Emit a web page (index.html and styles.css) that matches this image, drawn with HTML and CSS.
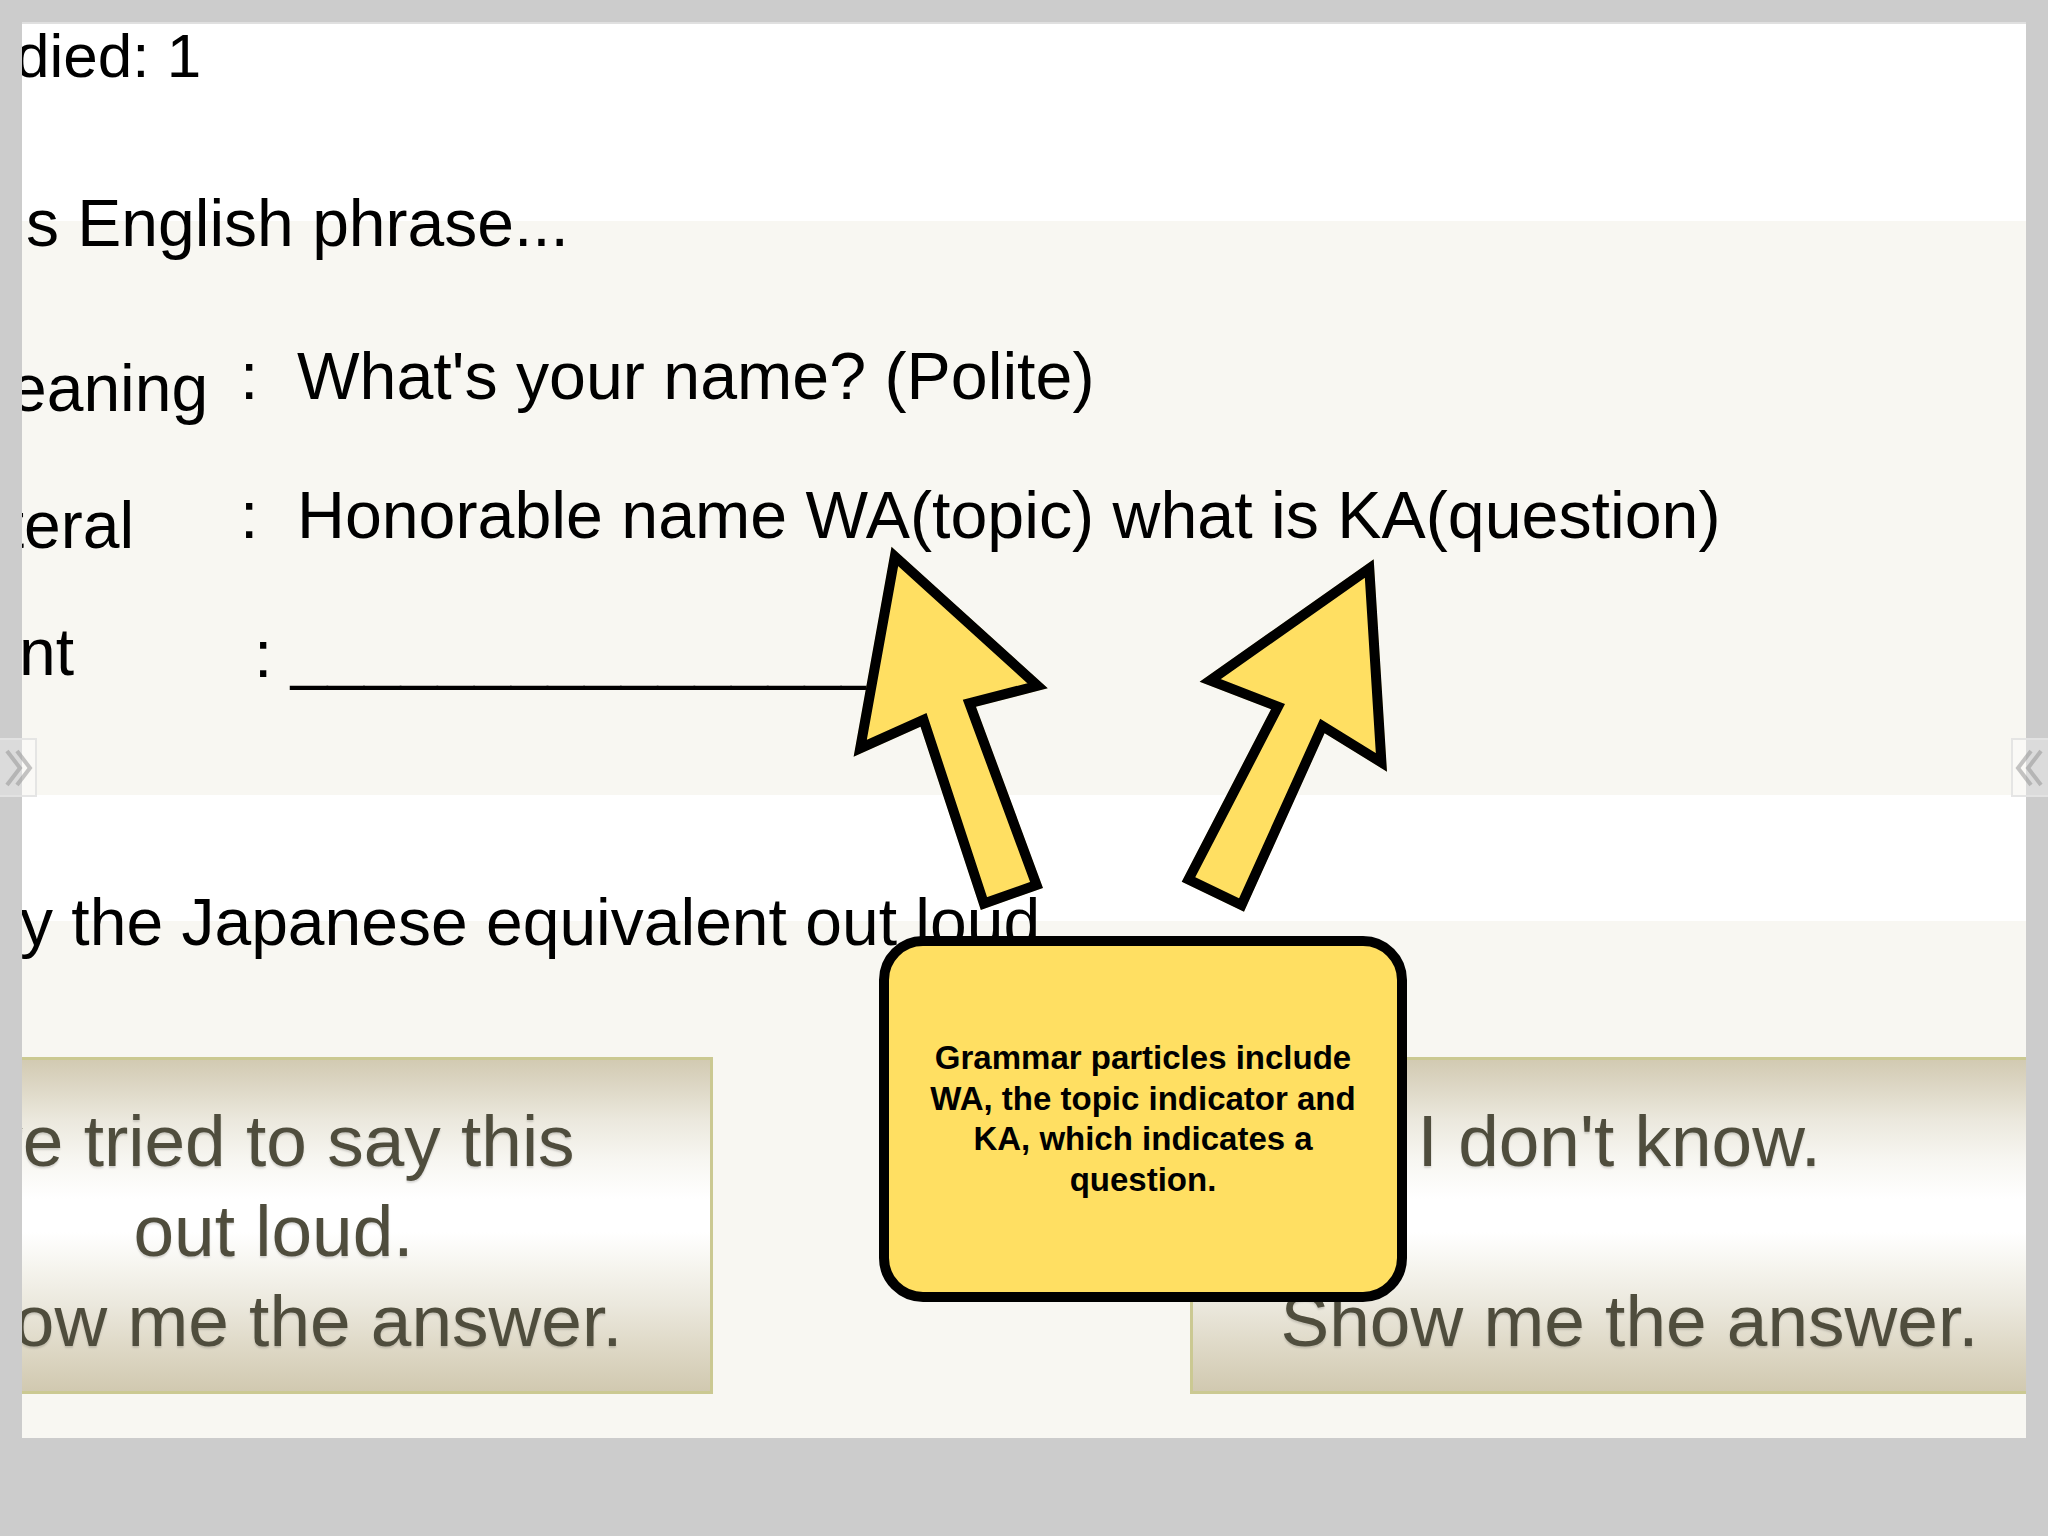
FILE: index.html
```html
<!DOCTYPE html>
<html lang="en">
<head>
<meta charset="utf-8">
<title>Flashcards</title>
<link rel="stylesheet" href="styles.css">
</head>
<body>
<main class="slide">
  <section class="band band-top">
    <p class="line line-count"><span class="clip"><span>Cards stu</span></span>died: 1</p>
    <p class="line line-heading"><span class="clip"><span>Translate thi</span></span>s English phrase...</p>
  </section>

  <section class="band band-phrase">
    <div class="row row-meaning">
      <span class="label"><span class="clip"><span>M</span></span>eaning</span>
      <span class="colon">:</span>
      <span class="value">What's your name? (Polite)</span>
    </div>
    <div class="row row-literal">
      <span class="label"><span class="clip"><span>Lit</span></span>eral</span>
      <span class="colon">:</span>
      <span class="value">Honorable name WA(topic) what is KA(question)</span>
    </div>
    <div class="row row-equiv">
      <span class="label"><span class="clip"><span>Equivale</span></span>nt</span>
      <span class="value">: __________________</span>
    </div>
  </section>

  <section class="band band-gap">
    <p class="line line-say"><span class="clip"><span>Sa</span></span>y the Japanese equivalent out loud</p>
  </section>

  <section class="band band-answer">
    <div class="buttons">
      <button class="btn" type="button">I've tried to say this&nbsp;<br>out loud.<br>Show me the answer.</button>
      <button class="btn" type="button">I don't know.&nbsp;<br><br>Show me the answer.</button>
    </div>
  </section>

  <svg class="arrows" viewBox="22 22 2004 1416" width="2004" height="1416" aria-hidden="true">
    <defs>
      <clipPath id="clip-left">
        <polygon points="891.5,546.7 1047.8,688.3 976,706.7 1043,888 980.8,910 920.5,726.7 853.6,756.7"/>
      </clipPath>
      <clipPath id="clip-right">
        <polygon points="1373.7,559.3 1387,771.7 1324.6,733.3 1244,911.7 1181.7,881.7 1271,709.3 1199.6,681.7"/>
      </clipPath>
    </defs>
    <polygon class="arrow" clip-path="url(#clip-left)" points="891.5,546.7 1047.8,688.3 976,706.7 1043,888 980.8,910 920.5,726.7 853.6,756.7"/>
    <polygon class="arrow" clip-path="url(#clip-right)" points="1373.7,559.3 1387,771.7 1324.6,733.3 1244,911.7 1181.7,881.7 1271,709.3 1199.6,681.7"/>
  </svg>

  <div class="callout">Grammar particles include WA, the topic indicator and KA, which indicates a question.</div>
</main>

<div class="pager pager-left" aria-label="Next">
  <svg viewBox="0 0 35 55" width="35" height="55" aria-hidden="true">
    <polyline points="7,11 20,28 7,45"/>
    <polyline points="17,11 30,28 17,45"/>
  </svg>
</div>
<div class="pager pager-right" aria-label="Previous">
  <svg viewBox="0 0 36 55" width="36" height="55" aria-hidden="true">
    <polyline points="18,11 5,28 18,45"/>
    <polyline points="28,11 15,28 28,45"/>
  </svg>
</div>
</body>
</html>
```
FILE: styles.css
```css
* {
  box-sizing: border-box;
  margin: 0;
  padding: 0;
}

html,
body {
  background: #cccccc;
}

body {
  position: relative;
  width: 2048px;
  height: 1536px;
  overflow: hidden;
  font-family: "Liberation Sans", Arial, Helvetica, sans-serif;
  color: #000;
}

.slide {
  position: relative;
  margin: 22px 22px 0;
  width: 2004px;
  height: 1416px;
  overflow: hidden;
  background: #ffffff;
}

/* text lines */
.line {
  font-size: 66px;
  line-height: 74px;
  white-space: nowrap;
}

/* hidden prefix that overflows past the left edge of the slide */
.clip {
  display: inline-flex;
  width: 0;
  justify-content: flex-end;
}

.clip > span {
  flex: none;
  white-space: pre;
}

/* bands */
.band {
  display: flow-root;
}

.band-top {
  height: 199px;
  border-top: 2px solid #e0e0e0;
}

.line-count {
  margin-top: -5px;
  margin-left: -7px;
  font-size: 62px;
}

.line-heading {
  margin-top: 93px;
  margin-left: 4px;
}

.band-phrase {
  height: 574px;
  padding-top: 118px;
  background: #f8f7f2;
}

.row {
  display: grid;
  grid-template-columns: 218px 57px auto;
  align-items: start;
  height: 139px;
  font-size: 66px;
  line-height: 74px;
  white-space: nowrap;
}

.row .value {
  font-size: 66.3px;
}

.row-equiv {
  grid-template-columns: 232px auto;
}

.row-equiv .value {
  font-size: 66px;
}

.label {
  display: block;
}

.row-meaning .label {
  margin-top: 12px;
  margin-left: -12px;
}

.row-literal .label {
  margin-top: 10px;
  margin-left: 2px;
}

.row-equiv .label {
  margin-top: -2px;
  margin-left: -3px;
}

.band-gap {
  height: 126px;
  padding-top: 90px;
  background: #ffffff;
}

.line-say {
  margin-left: -2px;
}

.band-answer {
  height: 517px;
  padding-top: 136px;
  background: #f8f7f2;
}

.buttons {
  display: flex;
  gap: 477px;
  margin-left: -188px;
}

.btn {
  display: block;
  flex: none;
  appearance: none;
  width: 879px;
  height: 337px;
  padding: 36px 0 25px;
  border: 3px solid #cbc992;
  background: linear-gradient(to bottom,
      #d2cab2 0%,
      #ddd7c5 8%,
      #ebe8dd 18%,
      #f7f6f1 30%,
      #ffffff 42%,
      #ffffff 52%,
      #f6f5ef 62%,
      #ebe8dd 74%,
      #ddd7c4 88%,
      #d1c9b0 100%);
  font-family: inherit;
  font-size: 73px;
  line-height: 90px;
  color: #4f4d3d;
  text-align: center;
  text-shadow: 0 2px 2px rgba(0, 0, 0, 0.15);
}

/* overlays */
.arrows {
  position: absolute;
  left: 0;
  top: 0;
  pointer-events: none;
}

.arrow {
  fill: #ffdf62;
  stroke: #000;
  stroke-width: 20;
  stroke-linejoin: miter;
}

.callout {
  position: absolute;
  left: 857px;
  top: 914px;
  width: 528px;
  height: 366px;
  display: flex;
  align-items: center;
  justify-content: center;
  padding: 0 40px;
  border: 10px solid #000;
  border-radius: 44px;
  background: #ffdf62;
  font-size: 33px;
  font-weight: bold;
  line-height: 40.5px;
  text-align: center;
  color: #000;
}

.pager {
  position: absolute;
  top: 738px;
  height: 59px;
  border: 2px solid rgba(226, 226, 226, 0.9);
  background: rgba(255, 255, 255, 0.3);
}

.pager svg {
  display: block;
}

.pager polyline {
  fill: none;
  stroke: rgba(150, 150, 150, 0.55);
  stroke-width: 4;
  stroke-linejoin: miter;
}

.pager-left {
  left: -2px;
  width: 39px;
}

.pager-right {
  left: 2011px;
  width: 40px;
}
```
